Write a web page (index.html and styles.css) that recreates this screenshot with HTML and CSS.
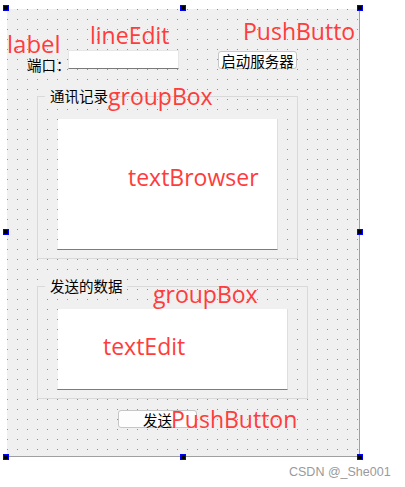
FILE: index.html
```html
<!DOCTYPE html>
<html lang="zh">
<head>
<meta charset="utf-8">
<title>Qt Designer form</title>
<link rel="stylesheet" href="styles.css">
</head>
<body>
<div class="page">
  <div class="form">
    <svg class="grid" width="352" height="447" aria-hidden="true">
      <defs>
        <pattern id="dots" width="10" height="10" patternUnits="userSpaceOnUse">
          <rect x="0" y="0" width="1" height="1" fill="#8f8f8f"/>
        </pattern>
      </defs>
      <rect width="352" height="447" fill="url(#dots)"/>
    </svg>

    <div class="w-label cn">端口：</div>
    <div class="w-lineedit"></div>
    <div class="w-button btn-start cn">启动服务器</div>

    <div class="w-group group-log">
      <div class="group-title cn">通讯记录</div>
      <div class="w-text text-browser"></div>
    </div>

    <div class="w-group group-send">
      <div class="group-title cn">发送的数据</div>
      <div class="w-text text-edit"></div>
    </div>

    <div class="w-button btn-send cn">发送</div>

    <div class="note n-label">label</div>
    <div class="note n-lineedit">lineEdit</div>
    <div class="note n-push1">PushButto</div>
    <div class="note n-group1">groupBox</div>
    <div class="note n-browser">textBrowser</div>
    <div class="note n-group2">groupBox</div>
    <div class="note n-textedit">textEdit</div>
    <div class="note n-push2">PushButton</div>

    <span class="handle h-tl"></span>
    <span class="handle h-tm"></span>
    <span class="handle h-tr"></span>
    <span class="handle h-ml"></span>
    <span class="handle h-mr"></span>
    <span class="handle h-bl"></span>
    <span class="handle h-bm"></span>
    <span class="handle h-br"></span>
  </div>
  <div class="watermark">CSDN @_She001</div>
</div>
</body>
</html>
```

FILE: styles.css
```css
* { box-sizing: border-box; }
html, body { margin: 0; padding: 0; background: #ffffff; }
.page { position: relative; width: 405px; height: 487px; overflow: hidden; }

.form {
  position: absolute;
  left: 7px; top: 9px;
  width: 353px; height: 448px;
  background: #f0f0f0;
  border-right: 1px solid #a0a0a0;
  border-bottom: 1px solid #a0a0a0;
}
.grid { position: absolute; left: 0; top: 0; display: block; }

.cn {
  font-family: "Noto Sans CJK SC", sans-serif;
  font-size: 14.5px;
  color: #000;
  white-space: nowrap;
}

.w-label {
  position: absolute;
  left: 20px; top: 49px;
  height: 14px; line-height: 14px;
}
.w-lineedit {
  position: absolute;
  left: 61px; top: 41px;
  width: 111px; height: 19px;
  background: #fff;
  border: 1px solid #e6e6e6;
  border-bottom-color: #7a7a7a;
}
.w-button {
  position: absolute;
  background: #fdfdfd;
  border: 1px solid #c6c6c6;
  border-radius: 3px;
  display: flex; align-items: center; justify-content: center;
}
.btn-start { left: 211px; top: 42px; width: 79px; height: 18px; }
.btn-send { left: 111px; top: 401px; width: 79px; height: 18px; }

.w-group {
  position: absolute;
  border: 1px solid #d9d9d9;
}
.group-log { left: 30px; top: 87px; width: 261px; height: 163px; }
.group-send { left: 30px; top: 277px; width: 271px; height: 113px; }
.group-title {
  position: absolute;
  left: 7px; top: -10px;
  height: 18px; line-height: 18px;
  padding: 0 4px 0 5px;
  background: #f0f0f0;
}
.w-text {
  position: absolute;
  left: 20px; top: 22px;
  background: #fff;
  border-right: 1px solid #dedede;
  border-bottom: 1px solid #7d7d7d;
}
.text-browser { width: 220px; height: 131px; }
.text-edit { width: 230px; height: 81px; }

.note {
  position: absolute;
  font-family: "Open Sans", sans-serif;
  font-size: 23px;
  line-height: 20px;
  color: #ff3c3c;
  white-space: nowrap;
}
.n-label { left: 0px; top: 25px; font-size: 24px; }
.n-lineedit { left: 83px; top: 16px; }
.n-push1 { left: 236px; top: 12px; }
.n-group1 { left: 101px; top: 77px; }
.n-browser { left: 121px; top: 158px; }
.n-group2 { left: 146px; top: 275px; }
.n-textedit { left: 96px; top: 327px; }
.n-push2 { left: 164px; top: 400px; }

.handle {
  position: absolute;
  width: 6px; height: 6px;
  background: #000;
  border: 1px solid #0000ff;
}
.h-tl { left: -4px; top: -4px; }
.h-tm { left: 173px; top: -4px; }
.h-tr { left: 350px; top: -4px; }
.h-ml { left: -4px; top: 220px; }
.h-mr { left: 350px; top: 220px; }
.h-bl { left: -4px; top: 445px; }
.h-bm { left: 173px; top: 445px; }
.h-br { left: 350px; top: 445px; }

.watermark {
  position: absolute;
  left: 289px; top: 465px;
  font-family: "Liberation Sans", Arial, sans-serif;
  font-size: 12.5px;
  line-height: 14px;
  color: #9a9a9a;
  white-space: nowrap;
}
```
